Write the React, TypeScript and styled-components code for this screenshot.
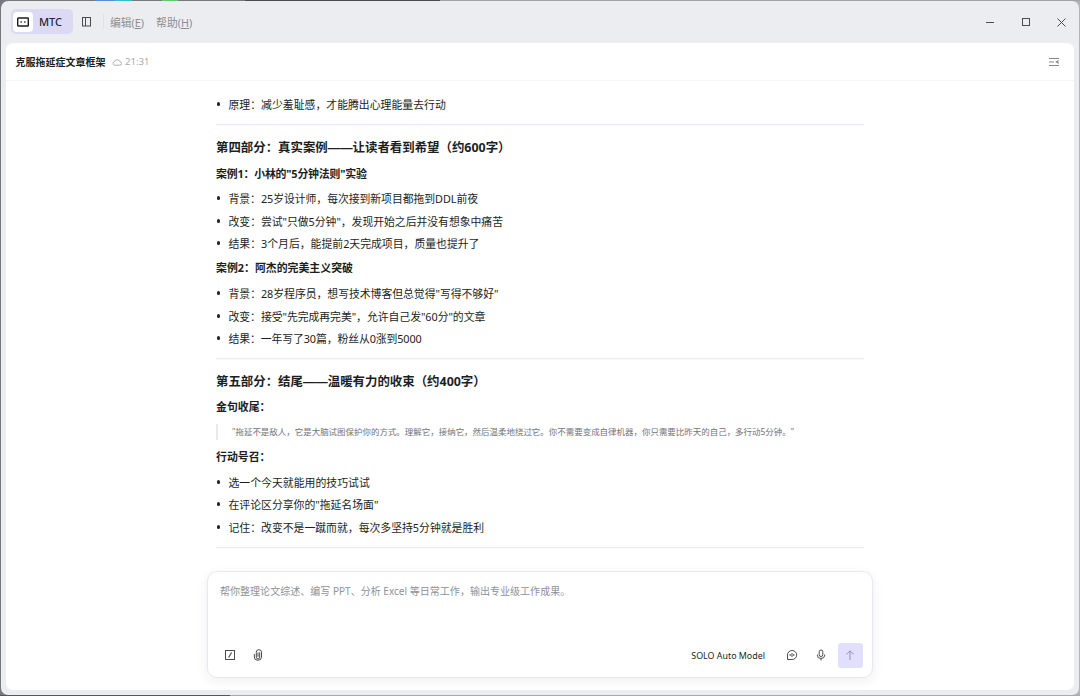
import React from "react";
import styled, { createGlobalStyle } from "styled-components";

const Global = createGlobalStyle`
  * { box-sizing: border-box; }
  html, body, #root { height: 100%; }
  body {
    margin: 0;
    overflow: hidden;
    font-family: "Noto Sans", "Noto Sans CJK SC", sans-serif;
    color: #1c1e22;
  }
`;

const Desktop = styled.div`
  height: 696px;
  width: 1080px;
  padding: 1px;
  background:
    linear-gradient(90deg, #55565c 0 230px, #a9a9ad 230px) 0 695px / 100% 1px no-repeat,
    linear-gradient(90deg, #77777c 0 95px, #5b8bd0 95px 115px, #35bfc9 115px 132px, #77777c 132px 162px, #63c96c 162px 178px, #77777c 178px 245px, #4a4a50 245px 440px, #a3a3a7 440px) 0 0 / 100% 1px no-repeat,
    linear-gradient(90deg, #77777e 0 50%, #b4b4b8 50%);
`;

const Window = styled.div`
  height: 694px;
  display: flex;
  flex-direction: column;
  padding: 0 5px 5px;
  border-radius: 7px;
  background: #ecedf1;
`;

const TitleBar = styled.header`
  height: 42px;
  flex: none;
  display: flex;
  align-items: center;
  padding: 0 0 1px 5px;
`;

const Brand = styled.div`
  width: 62px;
  height: 25px;
  display: flex;
  align-items: center;
  padding: 0 2px;
  border-radius: 5px;
  background: #dbd9f4;
  font-size: 11px;
  font-weight: 500;
  color: #26272b;
`;

const BrandTile = styled.span`
  width: 20px;
  height: 20px;
  display: grid;
  place-items: center;
  margin-right: 6px;
  border-radius: 4px;
  background: #fff;
`;

const SidebarToggle = styled.span`
  display: flex;
  margin-left: 8px;
`;

const Separator = styled.span`
  width: 1px;
  height: 15px;
  margin: 0 6px 0 11px;
  background: #e0e1e6;
`;

const MenuItem = styled.span`
  margin-right: 12px;
  font-size: 10.8px;
  color: #8b8e94;
  white-space: nowrap;
`;

const WindowButtons = styled.div`
  display: flex;
  gap: 24px;
  margin-left: auto;
  margin-right: 6px;
`;

const Panel = styled.main`
  flex: 1;
  min-height: 0;
  display: flex;
  flex-direction: column;
  border-radius: 7px;
  background: #fff;
`;

const PanelHeader = styled.div`
  height: 38px;
  flex: none;
  display: flex;
  align-items: center;
  padding: 0 14px 0 9.5px;
  border-bottom: 1px solid #f5f5f7;
`;

const DocTitle = styled.h1`
  margin: 0 6.5px 0 0;
  font-size: 10px;
  font-weight: 700;
`;

const SavedAt = styled.span`
  margin-left: 3px;
  font-size: 9.6px;
  color: #a8abb0;
`;

const OutlineButton = styled.span`
  display: flex;
  margin-left: auto;
`;

const Article = styled.article`
  width: 648px;
  margin: 12px 0 0 210px;
`;

const Line = styled.div<{ $track?: number }>`
  white-space: nowrap;
  letter-spacing: ${(p) => p.$track ?? 0}px;
`;

const Heading = styled(Line)`
  height: 20px;
  margin: 12.4px 0 6.8px;
  line-height: 20px;
  font-size: 12.43px;
  font-weight: 700;
`;

const Dash = styled.span`
  font-family: "Liberation Sans", sans-serif;
  font-size: 12.4px;
`;

const SubHeading = styled(Line)`
  height: 18px;
  line-height: 18px;
  font-size: 10.9px;
  font-weight: 700;
`;

const List = styled.div`
  padding: 4.7px 0 5px;
`;

const Item = styled(Line)`
  height: 22.4px;
  display: flex;
  align-items: center;
  font-size: 10.85px;
  &::before {
    content: "";
    width: 3px;
    height: 4px;
    margin: 0 9px 0 0.5px;
    border-radius: 1.5px;
    background: #222429;
  }
`;

const Rule = styled.div<{ $top?: number }>`
  height: 1px;
  margin-top: ${(p) => p.$top ?? 3.9}px;
  background: #ebecf5;
  box-shadow: 0 0.5px 0 #f3f4f9;
`;

const Quote = styled(Line)`
  height: 16px;
  margin: 7.6px 0 8.2px;
  padding-left: 14px;
  border-left: 2px solid #e9e9f4;
  line-height: 16px;
  font-size: 8.48px;
  color: #70747a;
`;

const Composer = styled.section`
  width: 666px;
  height: 107px;
  flex: none;
  display: flex;
  flex-direction: column;
  justify-content: space-between;
  margin: auto 0 12px 201px;
  padding: 11px 9.5px 9.5px 12px;
  border: 1px solid #e7e8f0;
  border-radius: 10px;
  background: #fff;
  box-shadow: 0 3px 12px rgba(30, 30, 50, 0.07);
`;

const Placeholder = styled(Line)`
  height: 16px;
  line-height: 16px;
  font-size: 10.04px;
  color: #8e9298;
`;

const Tools = styled.div`
  height: 25px;
  display: flex;
  align-items: center;
  padding-left: 4px;
`;

const Tool = styled.span<{ $gap: number }>`
  display: flex;
  margin-right: ${(p) => p.$gap}px;
`;

const Model = styled.span`
  margin-left: auto;
  margin-right: 20.5px;
  font-size: 8.9px;
`;

const Send = styled.button`
  width: 25px;
  height: 25px;
  display: grid;
  place-items: center;
  padding: 0;
  border: 0;
  border-radius: 3px;
  background: #e2defd;
`;

const Icon = ({ w = 12, h = w, color = "#4a4c52", sw = 1, children }: {
  w?: number; h?: number; color?: string; sw?: number; children: React.ReactNode;
}) => (
  <svg width={w} height={h} viewBox={`0 0 ${w} ${h}`} fill="none" stroke={color} strokeWidth={sw}>
    {children}
  </svg>
);

const cases1: [string, number][] = [
  ["背景：25岁设计师，每次接到新项目都拖到DDL前夜", -0.05],
  ["改变：尝试\"只做5分钟\"，发现开始之后并没有想象中痛苦", -0.03],
  ["结果：3个月后，能提前2天完成项目，质量也提升了", 0],
];
const cases2: [string, number][] = [
  ["背景：28岁程序员，想写技术博客但总觉得\"写得不够好\"", -0.03],
  ["改变：接受\"先完成再完美\"，允许自己发\"60分\"的文章", -0.04],
  ["结果：一年写了30篇，粉丝从0涨到5000", -0.1],
];
const actions: [string, number][] = [
  ["选一个今天就能用的技巧试试", 0.03],
  ["在评论区分享你的\"拖延名场面\"", 0],
  ["记住：改变不是一蹴而就，每次多坚持5分钟就是胜利", 0],
];

const Bullets = ({ items }: { items: [string, number][] }) => (
  <List>
    {items.map(([text, track]) => (
      <Item key={text} $track={track}>{text}</Item>
    ))}
  </List>
);

export default function App() {
  return (
    <Desktop>
      <Global />
      <Window>
        <TitleBar>
          <Brand>
            <BrandTile>
              <Icon w={12} h={10} color="#1c1d20" sw={1.4}>
                <rect x="0.7" y="1" width="10.6" height="8" rx="0.6" />
                <path d="M3.5 5h1.3M7.2 5h1.3" />
              </Icon>
            </BrandTile>
            MTC
          </Brand>
          <SidebarToggle>
            <Icon w={11} h={10}>
              <rect x="1.5" y="0.5" width="8" height="8.5" />
              <path d="M4.5 0.5v8.500" />
            </Icon>
          </SidebarToggle>
          <Separator />
          <MenuItem>编辑(<u>E</u>)</MenuItem>
          <MenuItem>帮助(<u>H</u>)</MenuItem>
          <WindowButtons>
            <Icon><path d="M2 6.5h8" /></Icon>
            <Icon><rect x="2.5" y="2.5" width="7" height="7" /></Icon>
            <Icon><path d="M1.500 2.500l8 8M9.500 2.500l-8 8" /></Icon>
          </WindowButtons>
        </TitleBar>
        <Panel>
          <PanelHeader>
            <DocTitle>克服拖延症文章框架</DocTitle>
            <Icon w={10} h={8} color="#a2a5aa" sw={0.9}>
              <path d="M2.6 7.2h5.2a1.7 1.7 0 0 0 .2-3.4A3 3 0 0 0 2.3 3.7A1.8 1.8 0 0 0 2.6 7.2z" />
            </Icon>
            <SavedAt>21:31</SavedAt>
            <OutlineButton>
              <Icon w={12} h={10} color="#85888e">
                <path d="M1 1.5h10M1 5h5M1 8.5h10" />
                <path d="M10.5 3v4L7.200 5z" fill="#85888e" stroke="none" />
              </Icon>
            </OutlineButton>
          </PanelHeader>
          <Article>
            <Item $track={0.02}>原理：减少羞耻感，才能腾出心理能量去行动</Item>
            <Rule $top={9} />
            <Heading>第四部分：真实案例<Dash>——</Dash>让读者看到希望（约600字）</Heading>
            <SubHeading $track={-0.18}>案例1：小林的"5分钟法则"实验</SubHeading>
            <Bullets items={cases1} />
            <SubHeading>案例2：阿杰的完美主义突破</SubHeading>
            <Bullets items={cases2} />
            <Rule />
            <Heading>第五部分：结尾<Dash>——</Dash>温暖有力的收束（约400字）</Heading>
            <SubHeading>金句收尾：</SubHeading>
            <Quote>"拖延不是敌人，它是大脑试图保护你的方式。理解它，接纳它，然后温柔地绕过它。你不需要变成自律机器，你只需要比昨天的自己，多行动5分钟。"</Quote>
            <SubHeading>行动号召：</SubHeading>
            <Bullets items={actions} />
            <Rule />
          </Article>
          <Composer>
            <Placeholder>帮你整理论文综述、编写 PPT、分析 Excel 等日常工作，输出专业级工作成果。</Placeholder>
            <Tools>
              <Tool $gap={16}>
                <Icon>
                  <rect x="1.5" y="1.5" width="9" height="9" />
                  <path d="M7.6 3.5l-3 5" strokeWidth="1.200" />
                </Icon>
              </Tool>
              <Tool $gap={0}>
                <Icon>
                  <path d="M6 3.500v4.300M4.300 3.300v4.900a1.700 1.700 0 0 0 3.400 0V3.300M2.300 5v3a3.600 3.300 0 0 0 7.200 0V3.100a2.600 2.400 0 0 0-5.200 0" />
                </Icon>
              </Tool>
              <Model>SOLO Auto Model</Model>
              <Tool $gap={17}>
                <Icon>
                  <path d="M1.5 10.5V6A4.600 4.500 0 1 1 6 10.500z" />
                  <path d="M4.200 5v2M6 4v4M7.800 5v2" />
                </Icon>
              </Tool>
              <Tool $gap={11}>
                <Icon>
                  <rect x="4.2" y="1" width="3.6" height="6.500" rx="1.800" />
                  <path d="M2.300 5.500v.6a3.700 3.400 0 0 0 7.400 0v-.6M6 9.500v2" />
                </Icon>
              </Tool>
              <Send>
                <Icon color="#9491ad"><path d="M6 11V2M2.500 5.300L6 1.800l3.500 3.500" /></Icon>
              </Send>
            </Tools>
          </Composer>
        </Panel>
      </Window>
    </Desktop>
  );
}
